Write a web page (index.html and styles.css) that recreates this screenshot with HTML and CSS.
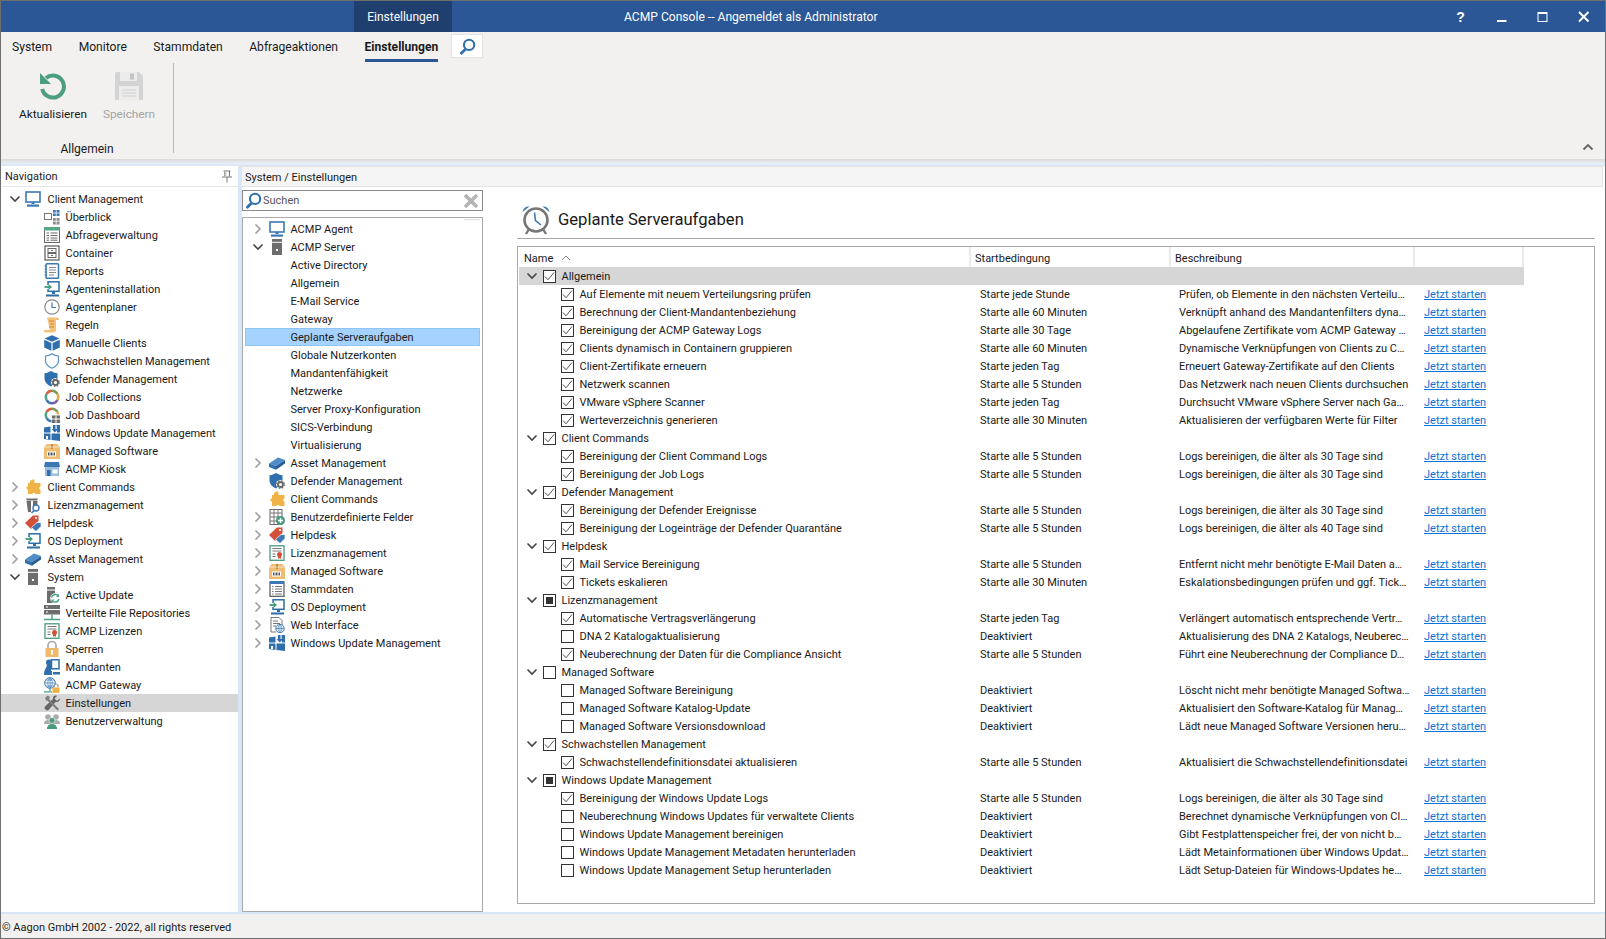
FILE: index.html
```html
<!DOCTYPE html>
<html lang="de">
<head>
<meta charset="utf-8">
<title>ACMP Console</title>
<link rel="stylesheet" href="styles.css">
</head>
<body>
<svg class="defs" width="0" height="0" aria-hidden="true">
<defs>
<symbol id="ch-d" viewBox="0 0 12 10"><path d="M1.500 2.500 6 7l4.500-4.500" fill="none" stroke="#444" stroke-width="1.600"/></symbol>
<symbol id="ch-r" viewBox="0 0 12 10"><path d="M3.500.5 8 5l-4.500 4.500" fill="none" stroke="#a0a0a0" stroke-width="1.600"/></symbol>
<symbol id="chk" viewBox="0 0 11 11"><path d="M1 5.500 4 8.800 10 1.500" fill="none" stroke="#555" stroke-width="1"/></symbol>
<symbol id="monitor" viewBox="0 0 16 16"><rect x="1" y="1" width="14" height="10" fill="none" stroke="#3b78b4" stroke-width="1.600"/><rect x="6.500" y="11" width="3" height="2" fill="#3b78b4"/><rect x="2" y="13.500" width="12" height="2.200" fill="#3b78b4"/></symbol>
<symbol id="overview" viewBox="0 0 16 16"><rect x=".5" y="4.500" width="7" height="6" fill="none" stroke="#777"/><rect x="9" y="1" width="6.500" height="6" fill="#3b78b4"/><rect x="9" y="9" width="6.500" height="6.500" fill="#8a8a8a"/><path d="M12.200 1v6M9 4h6.500M12.200 9v6.500M9 12.200h6.500" stroke="#fff" stroke-width=".8"/></symbol>
<symbol id="table" viewBox="0 0 16 16"><rect x=".5" y=".5" width="15" height="15" fill="#fff" stroke="#666"/><rect y="0" width="16" height="3.500" fill="#5aa585"/><path d="M2.500 6h2.500m1.500 0h7M2.500 8.500h2.500m1.500 0h7M2.500 11h2.500m1.500 0h7M2.500 13.200h2.500m1.500 0h7" stroke="#666"/></symbol>
<symbol id="container" viewBox="0 0 16 16"><rect x="1" y="1" width="14" height="14" fill="none" stroke="#666" stroke-width="1.300"/><rect x="4" y="3.500" width="8" height="4" fill="none" stroke="#666"/><rect x="4" y="8.500" width="8" height="4" fill="none" stroke="#666"/><path d="M7 5.500h2M7 10.500h2" stroke="#666"/></symbol>
<symbol id="report" viewBox="0 0 16 16"><rect x="2" y=".8" width="12.500" height="14.500" rx="1" fill="#fff" stroke="#3b78b4" stroke-width="1.500"/><path d="M5 4.500h7M5 7h7M5 9.500h7M5 12h5" stroke="#888"/><path d="M.5 3h2.500M.5 6h2.500M.5 9h2.500M.5 12h2.500" stroke="#3b78b4"/></symbol>
<symbol id="agent" viewBox="0 0 16 16"><rect x="4" y=".8" width="11" height="9.500" fill="none" stroke="#2d6da8" stroke-width="1.500"/><rect x="8" y="10" width="3" height="3" fill="#2d6da8"/><rect x="2" y="13.500" width="13" height="2" fill="#2d6da8"/><path d="M0 6h6" stroke="#fff" stroke-width="4"/><path d="M.5 6h5" stroke="#3f9a78" stroke-width="1.800"/><path d="M4.500 3 8 6 4.500 9z" fill="#3f9a78"/></symbol>
<symbol id="clock" viewBox="0 0 16 16"><circle cx="8" cy="8" r="7.200" fill="#fff" stroke="#888" stroke-width="1.200"/><path d="M8 3.500V8.500h4" fill="none" stroke="#3b78b4" stroke-width="1.200"/></symbol>
<symbol id="scroll" viewBox="0 0 16 16"><path d="M3 .5h10c1.500 0 2 1 2 2.500h-3v10c0 1.500-1 2.500-2.500 2.500H1c-1 0-1-2-1-2.500h8V3C8 2 8 .5 3 .5z" fill="#f0c27a"/><path d="M3 .5h6v13H6z" fill="#f0c27a"/><path d="M5 4h5M6 7h4M5 10h5" stroke="#c88a30" stroke-width="1.200"/></symbol>
<symbol id="cube" viewBox="0 0 16 16"><path d="M8 .2 15.500 3.500 8 6.800.5 3.500z" fill="#2f6fad"/><path d="M.200 4.700 7.400 8v7.800L.200 12.500z" fill="#2f6fad"/><path d="M15.800 4.700 8.600 8v7.800l7.200-3.300z" fill="#2f6fad"/></symbol>
<symbol id="shield" viewBox="0 0 16 16"><path d="M8 .8c2 1.400 4 2.100 6.500 2.200v4.500c0 3.500-2.500 6-6.500 7.700-4-1.700-6.500-4.200-6.500-7.700V3C4 2.900 6 2.200 8 .8z" fill="#fff" stroke="#5b8fc0" stroke-width="1.200"/></symbol>
<symbol id="defender" viewBox="0 0 16 16"><path d="M7 0c2 1.300 4 2 6.500 2.200V7C13.500 11 11 13.800 7 15.500 3 13.800.5 11 .5 7V2.200C3 2 5 1.300 7 0z" fill="#2f6fad"/><circle cx="11.500" cy="11.500" r="4.500" fill="#fff"/><circle cx="11.500" cy="11.500" r="2.500" fill="none" stroke="#666" stroke-width="1.800"/><circle cx="11.500" cy="11.500" r="3.800" fill="none" stroke="#666" stroke-width="1.200" stroke-dasharray="1.500 1.500"/></symbol>
<symbol id="ring" viewBox="0 0 16 16"><g fill="none" stroke-width="2.500"><path d="M2.600 5A6.300 6.300 0 0 1 8 1.700" stroke="#d9603f"/><path d="M8 1.700A6.300 6.300 0 0 1 13.400 5" stroke="#7f9a5a"/><path d="M13.400 5a6.300 6.300 0 0 1 0 6" stroke="#e5a93f"/><path d="M13.400 11A6.300 6.300 0 0 1 8 14.300" stroke="#7a5fa8"/><path d="M8 14.300A6.300 6.300 0 0 1 2.600 11" stroke="#3b78b4"/><path d="M2.600 11a6.300 6.300 0 0 1 0-6" stroke="#4aa585"/></g></symbol>
<symbol id="dash" viewBox="0 0 16 16"><use href="#ring"/><rect x="7.500" y="7.500" width="8.500" height="8.500" fill="#fff"/><rect x="8" y="8.500" width="8" height="7.500" fill="#6d6d6d"/><path d="M12 8.500V16M8 12h8" stroke="#fff"/></symbol>
<symbol id="win" viewBox="0 0 16 16"><path d="M0 2.500 6.500 1.500V7.500H0zM0 8.500h6.500v6.500L0 14zM7.500 8.500H16V16L7.500 15z" fill="#2f6fad"/><path d="M9 0h2.500v4H14L10.800 7.500 7.500 4H9zM12.500 0H16v7.500H13z" fill="#2f6fad"/><path d="M2 11h2v3H2z" fill="#fff"/></symbol>
<symbol id="box" viewBox="0 0 16 16"><path d="M0 4 3 1h10l3 3v12H0z" fill="#eebd74"/><path d="M7 1h2v5H7z" fill="#b98a3f"/><path d="M0 4h16" stroke="#fff" stroke-width=".6"/><rect x="3" y="8.500" width="9" height="5" fill="#fff"/><path d="M4.500 9.500v3M6 9.500v3M7.500 9.500v3M9 9.500v3M10.500 9.500v3" stroke="#555"/></symbol>
<symbol id="kiosk" viewBox="0 0 16 16"><path d="M1 1h14l1 5H0z" fill="#3b78b4"/><path d="M1 6h14v9H1z" fill="#9bbcdc"/><rect x="3" y="9" width="3.500" height="6" fill="#2f6fad"/><rect x="8.500" y="8.500" width="5" height="4" fill="#fff"/></symbol>
<symbol id="puzzle" viewBox="0 0 16 16"><path d="M5 1.500h1.500C6 0 10 0 9.500 1.500V4h6v3.500C14 7 14 11 15.500 10.500V15h-5c.5-1.500-3.500-1.500-3 0H3v-4.500C1.500 11 0 7 3 7.500V4H5z" fill="#f0b348"/></symbol>
<symbol id="lic" viewBox="0 0 16 16"><path d="M1 1.500h12l-1 2H2zM1.500 4H6v11H3zM8 4h4.500l-.3 5H8z" fill="#6d6d6d"/><circle cx="11" cy="11" r="3" fill="#fff" stroke="#3b78b4" stroke-width="1.400"/><path d="M9 13.500 6.500 16" stroke="#3b78b4" stroke-width="1.600"/></symbol>
<symbol id="tag" viewBox="0 0 16 16"><path d="M0 8 8 .5h5.500V6L6 14z" fill="#d5503a"/><circle cx="11" cy="3" r="1.100" fill="#fff"/><path d="M6.500 12.500 12 7.500h4v4l-5 5z" fill="#3b78b4" stroke="#fff" stroke-width=".7"/></symbol>
<symbol id="asset" viewBox="0 0 16 16"><path d="M0 8.500 9 2.500l7 2.500-9 6z" fill="#4f8cc8"/><path d="M0 8.500v3.500l7 2.800v-3.800z" fill="#2f6fad"/><path d="M7 11 16 5v3.500l-9 6.300z" fill="#275e94"/></symbol>
<symbol id="server" viewBox="0 0 16 16"><rect x="3" y="0" width="10" height="2.800" fill="#6d6d6d"/><rect x="3" y="3.800" width="10" height="12.200" fill="#6d6d6d"/><rect x="7" y="10" width="2" height="2" fill="#fff"/></symbol>
<symbol id="update" viewBox="0 0 16 16"><rect x="3" y="0" width="8" height="2.500" fill="#6d6d6d"/><rect x="3" y="3.500" width="8" height="12.500" fill="#6d6d6d"/><circle cx="11.200" cy="11.200" r="5" fill="#fff"/><path d="M7.500 10.500a4 4 0 0 1 7-1.500M15 12a4 4 0 0 1-7 1.500" fill="none" stroke="#4aa585" stroke-width="1.500"/><path d="M15 7v3h-3zM7.500 15.500v-3h3z" fill="#4aa585"/></symbol>
<symbol id="repo" viewBox="0 0 16 16"><rect y="0" width="16" height="4" fill="#6d6d6d"/><rect y="5" width="16" height="4.500" fill="#6d6d6d"/><rect x="2" y="1.500" width="2" height="1" fill="#fff"/><rect x="2" y="6.500" width="2" height="1" fill="#fff"/><path d="M8 9.500V14M0 14.500h16" stroke="#4aa585" stroke-width="1.400"/></symbol>
<symbol id="cert" viewBox="0 0 16 16"><rect x="1" y=".8" width="14" height="14.500" fill="#fff" stroke="#4a9a7c" stroke-width="1.300"/><path d="M3.500 3.500h9M3.500 6h9M3.500 9h3M3.500 11.500h3" stroke="#777"/><circle cx="10.500" cy="9.500" r="2.500" fill="#d5503a"/><path d="M9 11v3l1.500-1 1.500 1v-3z" fill="#d5503a"/></symbol>
<symbol id="lock" viewBox="0 0 16 16"><path d="M4 7V4.500a4 4 0 0 1 8 0V7" fill="none" stroke="#a8a8a8" stroke-width="1.600"/><rect x="1.500" y="7" width="13" height="9" fill="#f0b96b"/><path d="M8 9v4.500" stroke="#fff" stroke-width="2"/></symbol>
<symbol id="mand" viewBox="0 0 16 16"><rect x="7.500" y=".8" width="7.500" height="9" fill="#fff" stroke="#2f6fad" stroke-width="1.500"/><circle cx="5" cy="3.500" r="3" fill="#2f6fad"/><path d="M3 6h4v6H8v4H0c0-4 1-6 2-7z" fill="#2f6fad"/><rect x="9" y="13" width="7" height="2.500" fill="#2f6fad"/></symbol>
<symbol id="gateway" viewBox="0 0 16 16"><circle cx="6" cy="6" r="5.300" fill="#fff" stroke="#3b78b4"/><path d="M.7 6h10.600M6 .7v10.600M2 3h8M2 9h8M6 .7c-3 3-3 7.600 0 10.600M6 .7c3 3 3 7.600 0 10.600" fill="none" stroke="#3b78b4" stroke-width=".7"/><path d="M6 11.500V14M0 14.800h8" stroke="#4aa585" stroke-width="1.200"/><path d="M10 10.500V9a2 2 0 0 1 4 0v1.500" fill="none" stroke="#999" stroke-width="1.200"/><rect x="8.500" y="10.500" width="7" height="5.500" fill="#f0b348"/></symbol>
<symbol id="tools" viewBox="0 0 16 16"><path d="M15.500 3.500 13 6 10.500 3.500 13 1c-2-1.200-4.500.3-4 3L1 11.500c-1.500 2 1.500 5 3.500 3.500L11.500 7c2.800.5 5-1.500 4-3.500z" fill="#666"/><path d="M1 3 3.500.5 6 2 5 4l10 10-1.500 1.500-10-10-1 .5z" fill="#7d7d7d"/></symbol>
<symbol id="users" viewBox="0 0 16 16"><circle cx="4" cy="4" r="2.800" fill="#aaa"/><circle cx="12" cy="4" r="2.800" fill="#aaa"/><path d="M0 11c0-3 2-4 4-4s4 1 4 4zM8 11c0-3 2-4 4-4s4 1 4 4z" fill="#aaa"/><circle cx="8" cy="7.500" r="3" fill="#4a9a7c" stroke="#fff" stroke-width=".6"/><path d="M3 16c0-3.500 2-5 5-5s5 1.500 5 5z" fill="#4a9a7c"/></symbol>
<symbol id="fields" viewBox="0 0 16 16"><rect x="1" y=".5" width="12" height="15" fill="#fff" stroke="#666"/><path d="M1 4h12M5 .5v15M9 .5v15M1 8h12M1 12h12" stroke="#777"/><circle cx="11.500" cy="11.500" r="4.500" fill="#4a9a7c"/><path d="M11.500 9v5M9 11.500h5" stroke="#fff" stroke-width="1.400"/></symbol>
<symbol id="list" viewBox="0 0 16 16"><rect x="1" y=".8" width="14" height="14.500" fill="#fff" stroke="#555" stroke-width="1.200"/><rect x="1" y="0" width="14" height="3" fill="#3b78b4"/><path d="M3 5.500h1.500m1.500 0h7M3 8h1.500M6 8h7M3 10.500h1.500m1.500 0h7M3 13h1.500M6 13h7" stroke="#777"/></symbol>
<symbol id="web" viewBox="0 0 16 16"><path d="M2 .5h8l3 3v5M2 .5v14.500h5" fill="#fff" stroke="#777"/><path d="M4 4h5M4 6.500h7M4 9h3" stroke="#777"/><circle cx="11" cy="11.500" r="4.200" fill="#fff" stroke="#3b78b4"/><path d="M6.800 11.500h8.400M11 7.300v8.400M11 7.300c-2.500 2.500-2.500 6 0 8.400M11 7.300c2.500 2.500 2.500 6 0 8.400" fill="none" stroke="#3b78b4" stroke-width=".7"/></symbol>
<symbol id="mag" viewBox="0 0 16 16"><circle cx="9.500" cy="6.500" r="4.800" fill="none" stroke="#2f6fad" stroke-width="2"/><path d="M6 10.500 1.500 15" stroke="#2f6fad" stroke-width="2.600"/></symbol>
</defs>
</svg>

<div class="app">
  <header class="titlebar">
    <div class="ctx-tab">Einstellungen</div>
    <div class="win-title">ACMP Console -- Angemeldet als Administrator</div>
    <div class="win-btns">
      <span class="win-btn help">?</span>
      <span class="win-btn"><svg width="12" height="12" viewBox="0 0 12 12"><path d="M1 10h9.500" stroke="#fff" stroke-width="2"/></svg></span>
      <span class="win-btn"><svg width="12" height="12" viewBox="0 0 12 12"><rect x="1" y="1.500" width="9" height="9" fill="none" stroke="#fff"/><path d="M1 2h9" stroke="#fff" stroke-width="2"/></svg></span>
      <span class="win-btn"><svg width="12" height="12" viewBox="0 0 12 12"><path d="M1 1l9.500 9.500M10.500 1 1 10.500" stroke="#fff" stroke-width="2"/></svg></span>
    </div>
  </header>

  <section class="ribbon">
    <nav class="rb-tabs">
      <span class="rb-tab">System</span>
      <span class="rb-tab">Monitore</span>
      <span class="rb-tab">Stammdaten</span>
      <span class="rb-tab">Abfrageaktionen</span>
      <span class="rb-tab active">Einstellungen</span>
      <span class="rb-search"><svg width="17" height="17"><use href="#mag"/></svg></span>
    </nav>
    <div class="rb-body">
      <div class="rb-group">
        <div class="rb-btns">
          <div class="rb-btn">
            <svg class="rb-icon" viewBox="0 0 28 28"><path d="M7 6A11 11 0 1 1 3.200 17" fill="none" stroke="#4b9e7e" stroke-width="4"/><path d="M1 1v11h11z" fill="#4b9e7e"/></svg>
            <span>Aktualisieren</span>
          </div>
          <div class="rb-btn off">
            <svg class="rb-icon" viewBox="0 0 28 28"><path d="M0 1.500A1.500 1.500 0 0 1 1.500 0H24l4 4v24H1.500A1.500 1.500 0 0 1 0 26.500z" fill="#d4d4d4"/><rect x="5" y="0" width="17" height="9" fill="#ececec"/><rect x="15" y="1.500" width="4" height="6" fill="#c4c4c4"/><rect x="4" y="14" width="20" height="14" fill="#ececec"/><path d="M7 18h14M7 21h14M7 24h14" stroke="#cfcfcf"/></svg>
            <span>Speichern</span>
          </div>
        </div>
        <div class="rb-label">Allgemein</div>
      </div>
      <svg class="rb-collapse" width="12" height="8" viewBox="0 0 12 8"><path d="M1.500 6.500 6 2l4.500 4.500" fill="none" stroke="#666" stroke-width="1.800"/></svg>
    </div>
  </section>

  <div class="ribbon-shadow"></div>

  <main class="workspace">
    <aside class="nav">
      <div class="nav-head">
        <span>Navigation</span>
        <svg width="12" height="13" viewBox="0 0 12 13"><path d="M2.500 1h7M3.500 1v5.500M8.500 1v5.500M1 7h10M6 7v5.500" fill="none" stroke="#777"/><rect x="3.500" y="1" width="2" height="6" fill="#ccc"/></svg>
      </div>
      <div class="nav-tree">
        <div class="row top"><svg class="chev"><use href="#ch-d"/></svg><svg class="ico"><use href="#monitor"/></svg>Client Management</div>
        <div class="row sub"><svg class="ico"><use href="#overview"/></svg>Überblick</div>
        <div class="row sub"><svg class="ico"><use href="#table"/></svg>Abfrageverwaltung</div>
        <div class="row sub"><svg class="ico"><use href="#container"/></svg>Container</div>
        <div class="row sub"><svg class="ico"><use href="#report"/></svg>Reports</div>
        <div class="row sub"><svg class="ico"><use href="#agent"/></svg>Agenteninstallation</div>
        <div class="row sub"><svg class="ico"><use href="#clock"/></svg>Agentenplaner</div>
        <div class="row sub"><svg class="ico"><use href="#scroll"/></svg>Regeln</div>
        <div class="row sub"><svg class="ico"><use href="#cube"/></svg>Manuelle Clients</div>
        <div class="row sub"><svg class="ico"><use href="#shield"/></svg>Schwachstellen Management</div>
        <div class="row sub"><svg class="ico"><use href="#defender"/></svg>Defender Management</div>
        <div class="row sub"><svg class="ico"><use href="#ring"/></svg>Job Collections</div>
        <div class="row sub"><svg class="ico"><use href="#dash"/></svg>Job Dashboard</div>
        <div class="row sub"><svg class="ico"><use href="#win"/></svg>Windows Update Management</div>
        <div class="row sub"><svg class="ico"><use href="#box"/></svg>Managed Software</div>
        <div class="row sub"><svg class="ico"><use href="#kiosk"/></svg>ACMP Kiosk</div>
        <div class="row top"><svg class="chev"><use href="#ch-r"/></svg><svg class="ico"><use href="#puzzle"/></svg>Client Commands</div>
        <div class="row top"><svg class="chev"><use href="#ch-r"/></svg><svg class="ico"><use href="#lic"/></svg>Lizenzmanagement</div>
        <div class="row top"><svg class="chev"><use href="#ch-r"/></svg><svg class="ico"><use href="#tag"/></svg>Helpdesk</div>
        <div class="row top"><svg class="chev"><use href="#ch-r"/></svg><svg class="ico"><use href="#agent"/></svg>OS Deployment</div>
        <div class="row top"><svg class="chev"><use href="#ch-r"/></svg><svg class="ico"><use href="#asset"/></svg>Asset Management</div>
        <div class="row top"><svg class="chev"><use href="#ch-d"/></svg><svg class="ico"><use href="#server"/></svg>System</div>
        <div class="row sub"><svg class="ico"><use href="#update"/></svg>Active Update</div>
        <div class="row sub"><svg class="ico"><use href="#repo"/></svg>Verteilte File Repositories</div>
        <div class="row sub"><svg class="ico"><use href="#cert"/></svg>ACMP Lizenzen</div>
        <div class="row sub"><svg class="ico"><use href="#lock"/></svg>Sperren</div>
        <div class="row sub"><svg class="ico"><use href="#mand"/></svg>Mandanten</div>
        <div class="row sub"><svg class="ico"><use href="#gateway"/></svg>ACMP Gateway</div>
        <div class="row sub current"><svg class="ico"><use href="#tools"/></svg>Einstellungen</div>
        <div class="row sub"><svg class="ico"><use href="#users"/></svg>Benutzerverwaltung</div>
      </div>
    </aside>

    <div class="pane">
      <div class="crumb">System / Einstellungen</div>
      <div class="pane-body">
        <div class="settings">
          <div class="search">
            <svg width="17" height="17"><use href="#mag"/></svg>
            <span class="ph">Suchen</span>
            <svg class="clear" width="16" height="16" viewBox="0 0 16 16"><path d="M2 2l12 12M14 2 2 14" stroke="#b4b4b4" stroke-width="3.600"/></svg>
          </div>
          <div class="settings-tree">
            <span class="ghost"></span>
            <div class="row st"><svg class="chev"><use href="#ch-r"/></svg><svg class="ico"><use href="#monitor"/></svg>ACMP Agent</div>
            <div class="row st"><svg class="chev"><use href="#ch-d"/></svg><svg class="ico"><use href="#server"/></svg>ACMP Server</div>
            <div class="row sc">Active Directory</div>
            <div class="row sc">Allgemein</div>
            <div class="row sc">E-Mail Service</div>
            <div class="row sc">Gateway</div>
            <div class="row sc picked">Geplante Serveraufgaben</div>
            <div class="row sc">Globale Nutzerkonten</div>
            <div class="row sc">Mandantenfähigkeit</div>
            <div class="row sc">Netzwerke</div>
            <div class="row sc">Server Proxy-Konfiguration</div>
            <div class="row sc">SICS-Verbindung</div>
            <div class="row sc">Virtualisierung</div>
            <div class="row st"><svg class="chev"><use href="#ch-r"/></svg><svg class="ico"><use href="#asset"/></svg>Asset Management</div>
            <div class="row st"><span class="chev"></span><svg class="ico"><use href="#defender"/></svg>Defender Management</div>
            <div class="row st"><span class="chev"></span><svg class="ico"><use href="#puzzle"/></svg>Client Commands</div>
            <div class="row st"><svg class="chev"><use href="#ch-r"/></svg><svg class="ico"><use href="#fields"/></svg>Benutzerdefinierte Felder</div>
            <div class="row st"><svg class="chev"><use href="#ch-r"/></svg><svg class="ico"><use href="#tag"/></svg>Helpdesk</div>
            <div class="row st"><svg class="chev"><use href="#ch-r"/></svg><svg class="ico"><use href="#cert"/></svg>Lizenzmanagement</div>
            <div class="row st"><svg class="chev"><use href="#ch-r"/></svg><svg class="ico"><use href="#box"/></svg>Managed Software</div>
            <div class="row st"><svg class="chev"><use href="#ch-r"/></svg><svg class="ico"><use href="#list"/></svg>Stammdaten</div>
            <div class="row st"><svg class="chev"><use href="#ch-r"/></svg><svg class="ico"><use href="#agent"/></svg>OS Deployment</div>
            <div class="row st"><svg class="chev"><use href="#ch-r"/></svg><svg class="ico"><use href="#web"/></svg>Web Interface</div>
            <div class="row st"><svg class="chev"><use href="#ch-r"/></svg><svg class="ico"><use href="#win"/></svg>Windows Update Management</div>
          </div>
        </div>

        <div class="detail">
          <div class="detail-head">
            <svg width="30" height="31" viewBox="0 0 30 31"><path d="M1.500 8a6 6 0 0 1 7-5.500zM28.500 8a6 6 0 0 0-7-5.500z" fill="#3b78b4"/><circle cx="15" cy="16" r="11.500" fill="#fff" stroke="#777" stroke-width="2.600"/><path d="M8 25l-3 5M22 25l3 5" stroke="#777" stroke-width="2.400"/><path d="M13.500 8.500 14.500 16.500 20 21" fill="none" stroke="#3b78b4" stroke-width="1.600"/></svg>
            <h1>Geplante Serveraufgaben</h1>
          </div>
          <div class="grid">
            <div class="g-head">
              <div class="c1">Name<svg class="sort" width="10" height="6" viewBox="0 0 10 6"><path d="M1 5 5 1l4 4" fill="none" stroke="#888"/></svg></div>
              <div class="c2">Startbedingung</div>
              <div class="c3">Beschreibung</div>
              <div class="c4"></div>
            </div>
            <div class="g-group first"><svg class="chev"><use href="#ch-d"/></svg><span class="cb"><svg><use href="#chk"/></svg></span>Allgemein</div>
            <div class="g-row"><div class="c1"><span class="cb"><svg><use href="#chk"/></svg></span>Auf Elemente mit neuem Verteilungsring prüfen</div><div class="c2">Starte jede Stunde</div><div class="c3">Prüfen, ob Elemente in den nächsten Verteilu…</div><div class="c4"><a href="#">Jetzt starten</a></div></div>
            <div class="g-row"><div class="c1"><span class="cb"><svg><use href="#chk"/></svg></span>Berechnung der Client-Mandantenbeziehung</div><div class="c2">Starte alle 60 Minuten</div><div class="c3">Verknüpft anhand des Mandantenfilters dyna…</div><div class="c4"><a href="#">Jetzt starten</a></div></div>
            <div class="g-row"><div class="c1"><span class="cb"><svg><use href="#chk"/></svg></span>Bereinigung der ACMP Gateway Logs</div><div class="c2">Starte alle 30 Tage</div><div class="c3">Abgelaufene Zertifikate vom ACMP Gateway …</div><div class="c4"><a href="#">Jetzt starten</a></div></div>
            <div class="g-row"><div class="c1"><span class="cb"><svg><use href="#chk"/></svg></span>Clients dynamisch in Containern gruppieren</div><div class="c2">Starte alle 60 Minuten</div><div class="c3">Dynamische Verknüpfungen von Clients zu C…</div><div class="c4"><a href="#">Jetzt starten</a></div></div>
            <div class="g-row"><div class="c1"><span class="cb"><svg><use href="#chk"/></svg></span>Client-Zertifikate erneuern</div><div class="c2">Starte jeden Tag</div><div class="c3">Erneuert Gateway-Zertifikate auf den Clients</div><div class="c4"><a href="#">Jetzt starten</a></div></div>
            <div class="g-row"><div class="c1"><span class="cb"><svg><use href="#chk"/></svg></span>Netzwerk scannen</div><div class="c2">Starte alle 5 Stunden</div><div class="c3">Das Netzwerk nach neuen Clients durchsuchen</div><div class="c4"><a href="#">Jetzt starten</a></div></div>
            <div class="g-row"><div class="c1"><span class="cb"><svg><use href="#chk"/></svg></span>VMware vSphere Scanner</div><div class="c2">Starte jeden Tag</div><div class="c3">Durchsucht VMware vSphere Server nach Ga…</div><div class="c4"><a href="#">Jetzt starten</a></div></div>
            <div class="g-row"><div class="c1"><span class="cb"><svg><use href="#chk"/></svg></span>Werteverzeichnis generieren</div><div class="c2">Starte alle 30 Minuten</div><div class="c3">Aktualisieren der verfügbaren Werte für Filter</div><div class="c4"><a href="#">Jetzt starten</a></div></div>

            <div class="g-group"><svg class="chev"><use href="#ch-d"/></svg><span class="cb"><svg><use href="#chk"/></svg></span>Client Commands</div>
            <div class="g-row"><div class="c1"><span class="cb"><svg><use href="#chk"/></svg></span>Bereinigung der Client Command Logs</div><div class="c2">Starte alle 5 Stunden</div><div class="c3">Logs bereinigen, die älter als 30 Tage sind</div><div class="c4"><a href="#">Jetzt starten</a></div></div>
            <div class="g-row"><div class="c1"><span class="cb"><svg><use href="#chk"/></svg></span>Bereinigung der Job Logs</div><div class="c2">Starte alle 5 Stunden</div><div class="c3">Logs bereinigen, die älter als 30 Tage sind</div><div class="c4"><a href="#">Jetzt starten</a></div></div>

            <div class="g-group"><svg class="chev"><use href="#ch-d"/></svg><span class="cb"><svg><use href="#chk"/></svg></span>Defender Management</div>
            <div class="g-row"><div class="c1"><span class="cb"><svg><use href="#chk"/></svg></span>Bereinigung der Defender Ereignisse</div><div class="c2">Starte alle 5 Stunden</div><div class="c3">Logs bereinigen, die älter als 30 Tage sind</div><div class="c4"><a href="#">Jetzt starten</a></div></div>
            <div class="g-row"><div class="c1"><span class="cb"><svg><use href="#chk"/></svg></span>Bereinigung der Logeinträge der Defender Quarantäne</div><div class="c2">Starte alle 5 Stunden</div><div class="c3">Logs bereinigen, die älter als 40 Tage sind</div><div class="c4"><a href="#">Jetzt starten</a></div></div>

            <div class="g-group"><svg class="chev"><use href="#ch-d"/></svg><span class="cb"><svg><use href="#chk"/></svg></span>Helpdesk</div>
            <div class="g-row"><div class="c1"><span class="cb"><svg><use href="#chk"/></svg></span>Mail Service Bereinigung</div><div class="c2">Starte alle 5 Stunden</div><div class="c3">Entfernt nicht mehr benötigte E-Mail Daten a…</div><div class="c4"><a href="#">Jetzt starten</a></div></div>
            <div class="g-row"><div class="c1"><span class="cb"><svg><use href="#chk"/></svg></span>Tickets eskalieren</div><div class="c2">Starte alle 30 Minuten</div><div class="c3">Eskalationsbedingungen prüfen und ggf. Tick…</div><div class="c4"><a href="#">Jetzt starten</a></div></div>

            <div class="g-group"><svg class="chev"><use href="#ch-d"/></svg><span class="cb mixed"></span>Lizenzmanagement</div>
            <div class="g-row"><div class="c1"><span class="cb"><svg><use href="#chk"/></svg></span>Automatische Vertragsverlängerung</div><div class="c2">Starte jeden Tag</div><div class="c3">Verlängert automatisch entsprechende Vertr…</div><div class="c4"><a href="#">Jetzt starten</a></div></div>
            <div class="g-row"><div class="c1"><span class="cb"></span>DNA 2 Katalogaktualisierung</div><div class="c2">Deaktiviert</div><div class="c3">Aktualisierung des DNA 2 Katalogs, Neuberec…</div><div class="c4"><a href="#">Jetzt starten</a></div></div>
            <div class="g-row"><div class="c1"><span class="cb"><svg><use href="#chk"/></svg></span>Neuberechnung der Daten für die Compliance Ansicht</div><div class="c2">Starte alle 5 Stunden</div><div class="c3">Führt eine Neuberechnung der Compliance D…</div><div class="c4"><a href="#">Jetzt starten</a></div></div>

            <div class="g-group"><svg class="chev"><use href="#ch-d"/></svg><span class="cb"></span>Managed Software</div>
            <div class="g-row"><div class="c1"><span class="cb"></span>Managed Software Bereinigung</div><div class="c2">Deaktiviert</div><div class="c3">Löscht nicht mehr benötigte Managed Softwa…</div><div class="c4"><a href="#">Jetzt starten</a></div></div>
            <div class="g-row"><div class="c1"><span class="cb"></span>Managed Software Katalog-Update</div><div class="c2">Deaktiviert</div><div class="c3">Aktualisiert den Software-Katalog für Manag…</div><div class="c4"><a href="#">Jetzt starten</a></div></div>
            <div class="g-row"><div class="c1"><span class="cb"></span>Managed Software Versionsdownload</div><div class="c2">Deaktiviert</div><div class="c3">Lädt neue Managed Software Versionen heru…</div><div class="c4"><a href="#">Jetzt starten</a></div></div>

            <div class="g-group"><svg class="chev"><use href="#ch-d"/></svg><span class="cb"><svg><use href="#chk"/></svg></span>Schwachstellen Management</div>
            <div class="g-row"><div class="c1"><span class="cb"><svg><use href="#chk"/></svg></span>Schwachstellendefinitionsdatei aktualisieren</div><div class="c2">Starte alle 5 Stunden</div><div class="c3">Aktualisiert die Schwachstellendefinitionsdatei</div><div class="c4"><a href="#">Jetzt starten</a></div></div>

            <div class="g-group"><svg class="chev"><use href="#ch-d"/></svg><span class="cb mixed"></span>Windows Update Management</div>
            <div class="g-row"><div class="c1"><span class="cb"><svg><use href="#chk"/></svg></span>Bereinigung der Windows Update Logs</div><div class="c2">Starte alle 5 Stunden</div><div class="c3">Logs bereinigen, die älter als 30 Tage sind</div><div class="c4"><a href="#">Jetzt starten</a></div></div>
            <div class="g-row"><div class="c1"><span class="cb"></span>Neuberechnung Windows Updates für verwaltete Clients</div><div class="c2">Deaktiviert</div><div class="c3">Berechnet dynamische Verknüpfungen von Cl…</div><div class="c4"><a href="#">Jetzt starten</a></div></div>
            <div class="g-row"><div class="c1"><span class="cb"></span>Windows Update Management bereinigen</div><div class="c2">Deaktiviert</div><div class="c3">Gibt Festplattenspeicher frei, der von nicht b…</div><div class="c4"><a href="#">Jetzt starten</a></div></div>
            <div class="g-row"><div class="c1"><span class="cb"></span>Windows Update Management Metadaten herunterladen</div><div class="c2">Deaktiviert</div><div class="c3">Lädt Metainformationen über Windows Updat…</div><div class="c4"><a href="#">Jetzt starten</a></div></div>
            <div class="g-row"><div class="c1"><span class="cb"></span>Windows Update Management Setup herunterladen</div><div class="c2">Deaktiviert</div><div class="c3">Lädt Setup-Dateien für Windows-Updates he…</div><div class="c4"><a href="#">Jetzt starten</a></div></div>
          </div>
        </div>
      </div>
    </div>
  </main>

  <footer class="status">© Aagon GmbH 2002 - 2022, all rights reserved</footer>
</div>
</body>
</html>
```

FILE: styles.css
```css
* { box-sizing: border-box; }
html, body { margin: 0; height: 100%; }
body {
  font-family: Roboto, "Liberation Sans", sans-serif;
  font-size: 11px;
  font-variant-ligatures: none;
  color: #1a1a1a;
  background: #fff;
  overflow: hidden;
}
.defs { position: absolute; }
svg { display: block; flex: none; }

.app {
  width: 1606px;
  height: 939px;
  display: flex;
  flex-direction: column;
  border: 1px solid #6f6f6f;
}

/* Title bar */
.titlebar {
  height: 31px;
  flex: none;
  background: #2b5797;
  color: #fff;
  display: flex;
  align-items: center;
}
.ctx-tab {
  margin-left: 353px;
  width: 98px;
  height: 100%;
  padding-top: 1px;
  background: #1f3f6e;
  display: flex;
  align-items: center;
  justify-content: center;
  font-size: 12px;
}
.win-title { margin-left: 172px; font-size: 12.1px; }
.win-btns { margin-left: auto; display: flex; padding-right: 1px; }
.win-btn {
  width: 41px;
  height: 31px;
  display: flex;
  align-items: center;
  justify-content: center;
}
.help { font-size: 14px; font-weight: 700; font-family: "Liberation Sans", sans-serif; }

/* Ribbon */
.ribbon {
  height: 127px;
  flex: none;
  background: #f2f1f0;
  display: flex;
  flex-direction: column;
}
.rb-tabs {
  height: 30px;
  flex: none;
  display: flex;
  align-items: stretch;
  padding-left: 11px;
  gap: 26.5px;
  font-size: 12.1px;
}
.rb-tab {
  display: flex;
  align-items: center;
  padding-top: 3px;
  height: 30px;
  border-bottom: 3px solid transparent;
}
.rb-tab.active { font-weight: 700; border-bottom-color: #2b5797; }
.rb-search {
  width: 32px;
  height: 24px;
  margin: 2px 0 0 -13.5px;
  background: #fff;
  border: 1px solid #e2e2e2;
  display: flex;
  align-items: center;
  justify-content: center;
}
.rb-body { flex: 1; display: flex; position: relative; }
.rb-group {
  width: 173px;
  margin-top: 1px;
  height: 90px;
  border-right: 1px solid #b8b8b8;
  display: flex;
  flex-direction: column;
}
.rb-btns { display: flex; padding-left: 18px; gap: 13px; flex: 1; }
.rb-btn {
  display: flex;
  flex-direction: column;
  align-items: center;
  width: 68px;
  padding-top: 9px;
  font-size: 11.8px;
}
.rb-btn.off { color: #a3a3a3; width: 58px; }
.rb-icon { width: 28px; height: 28px; margin-bottom: 7px; }
.rb-label { text-align: center; font-size: 12px; height: 8px; line-height: 8px; }
.rb-collapse { position: absolute; right: 11px; bottom: 8px; }

.ribbon-shadow {
  height: 7px;
  flex: none;
  background: linear-gradient(#d9d9d9, #e8eef5 60%, #d7e7f7);
}

/* Workspace */
.workspace { flex: 1; min-height: 0; display: flex; background: #d7e7f7; }

.nav {
  width: 237px;
  flex: none;
  background: #fff;
  padding-left: 1px;
  display: flex;
  flex-direction: column;
}
.nav-head {
  height: 21px;
  flex: none;
  display: flex;
  align-items: center;
  justify-content: space-between;
  padding: 1px 5px 0 3px;
  border-bottom: 1px solid #e6e6e6;
}
.nav-tree { padding-top: 3px; }

.row { height: 18px; display: flex; align-items: center; white-space: nowrap; }
.chev { width: 12px; height: 10px; }
.ico { width: 16px; height: 16px; margin: 0 5.5px 0 5px; }
.row.top { padding-left: 8px; margin-left: -1px; }
.row.top .ico { margin: 0 6.5px 0 4px; }
.row.sub { padding-left: 37px; }
.row.current { background: #d6d6d6; margin-left: -1px; padding-left: 38px; }

.pane {
  flex: 1;
  min-width: 0;
  margin-left: 4px;
  background: #fff;
  display: flex;
  flex-direction: column;
}
.crumb {
  height: 21px;
  flex: none;
  padding: 1px 0 0 3px;
  display: flex;
  align-items: center;
  background: #f5f5f5;
  border: 1px solid #e2e2e2;
  border-left: 0;
  margin-right: 2px;
}
.pane-body { flex: 1; min-height: 0; display: flex; }

/* Settings tree column */
.settings {
  width: 241px;
  flex: none;
  padding-top: 3px;
  display: flex;
  flex-direction: column;
  gap: 6px;
}
.search {
  height: 21px;
  flex: none;
  border: 1px solid #8a8a8a;
  display: flex;
  align-items: center;
  padding: 0 3px 0 2px;
  gap: 1px;
}
.ph { color: #555; }
.clear { margin-left: auto; }
.settings-tree {
  flex: 1;
  position: relative;
  border: 1px solid #aaa;
  padding-top: 2px;
}
.ghost {
  position: absolute;
  top: 1px;
  right: 2px;
  width: 16px;
  height: 1px;
  background: #dcdcdc;
}
.row.st { padding-left: 9px; }
.row.st .ico { margin-right: 5.5px; }
.row.sc { padding-left: 47.5px; }
.row.picked {
  margin: 0 2px;
  padding-left: 44.5px;
  background: #a6d2ff;
  border: 1px solid #8ec4f2;
}

/* Detail */
.detail { flex: 1; min-width: 0; padding: 0 10px 8px 34px; display: flex; flex-direction: column; }
.detail-head {
  height: 52px;
  flex: none;
  display: flex;
  align-items: center;
  gap: 7px;
  padding: 14px 0 0 4px;
  border-bottom: 1px solid #a6a6a6;
}
.detail-head h1 { margin: 0; font-size: 16.6px; font-weight: 400; }
.grid {
  flex: 1;
  margin-top: 7px;
  border: 1px solid #aaa;
  padding-left: 1px;
}
.g-head, .g-row { display: flex; height: 18px; align-items: center; white-space: nowrap; }
.g-head { height: 20px; width: 1005px; }
.c1 { width: 451px; display: flex; align-items: center; overflow: hidden; }
.c2 { width: 200px; overflow: hidden; }
.c3 { width: 244px; overflow: hidden; }
.c4 { width: 110px; }
.g-head > div {
  height: 20px;
  display: flex;
  align-items: center;
  padding: 2px 0 0 4px;
  border-left: 2px solid #ebebeb;
}
.g-head > .c1 { border-left: 0; padding-left: 5px; width: 450px; }
.g-head > .c4 { border-right: 2px solid #ebebeb; width: 111px; }
.sort { margin-left: 8px; }
.g-row { width: 1005px; }
.g-row .c1 { padding-left: 42px; }
.g-row .c2 { padding-left: 10px; }
.g-row .c3 { padding-left: 9px; }
.g-row .c4 { padding-left: 10px; }
.g-group {
  height: 18px;
  width: 1005px;
  display: flex;
  align-items: center;
  padding-left: 7px;
  white-space: nowrap;
}
.g-group.first { background: #d6d6d6; }
.cb {
  width: 13px;
  height: 13px;
  border: 1px solid #333;
  background: #fff;
  flex: none;
  margin-right: 5.5px;
  display: flex;
  align-items: center;
  justify-content: center;
}
.cb svg { width: 11px; height: 11px; }
.g-group .cb { margin-left: 5px; }
.cb.mixed::after { content: ""; width: 7px; height: 7px; background: #333; }
a { color: #0a72d8; }

.status {
  height: 26px;
  flex: none;
  background: #f2f1f0;
  border-top: 2px solid #d7e7f7;
  padding: 2px 0 0 1px;
  display: flex;
  align-items: center;
}
```
